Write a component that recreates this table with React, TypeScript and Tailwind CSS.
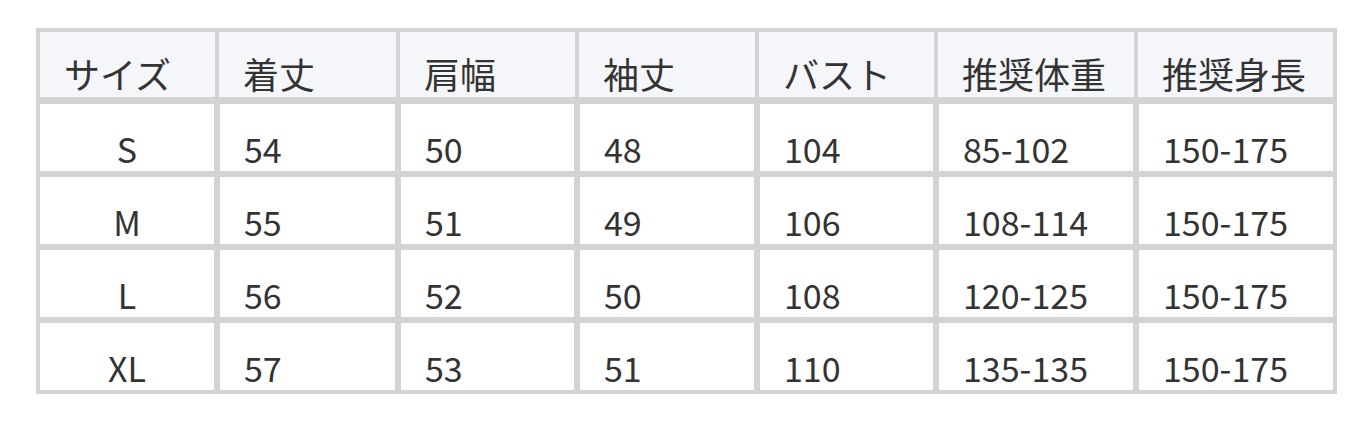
const headers = ["サイズ", "着丈", "肩幅", "袖丈", "バスト", "推奨体重", "推奨身長"]

const widths = ["w-[179px]", "w-[181px]", "w-[179px]", "w-[180px]", "w-[179px]", "w-[200px]", "w-[199px]"]

const rows = [
  ["S", "54", "50", "48", "104", "85-102", "150-175"],
  ["M", "55", "51", "49", "106", "108-114", "150-175"],
  ["L", "56", "52", "50", "108", "120-125", "150-175"],
  ["XL", "57", "53", "51", "110", "135-135", "150-175"],
]

export default function App() {
  return (
    <div className="min-h-screen bg-white pl-[36px] pt-[28px] text-[#333] font-['Noto_Sans_CJK_JP','Noto_Sans',sans-serif]">
      <table className="w-[1301px] table-fixed border-separate border-spacing-0 border-2 border-[#d3d3d3] text-[34px] leading-none">
        <thead>
          <tr>
            {headers.map((h, i) => (
              <th
                key={h}
                className={`${widths[i]} border-2 border-b-4 border-[#d3d3d3] bg-[#f5f6fa] pl-[24px] pt-[23px] pb-[6px] text-left text-[36px] font-normal`}
              >
                {h}
              </th>
            ))}
          </tr>
        </thead>
        <tbody>
          {rows.map((r, ri) => (
            <tr key={r[0]}>
              {r.map((c, ci) => (
                <td
                  key={ci}
                  className={`border-[3px] border-[#d3d3d3] pt-[28px] pb-[5px] first:border-l-2 last:border-r-2 ${
                    ri === rows.length - 1 ? "border-b-2" : ""
                  } ${ci === 0 ? "text-center" : "pl-[24px] text-left"}`}
                >
                  {c}
                </td>
              ))}
            </tr>
          ))}
        </tbody>
      </table>
    </div>
  )
}
